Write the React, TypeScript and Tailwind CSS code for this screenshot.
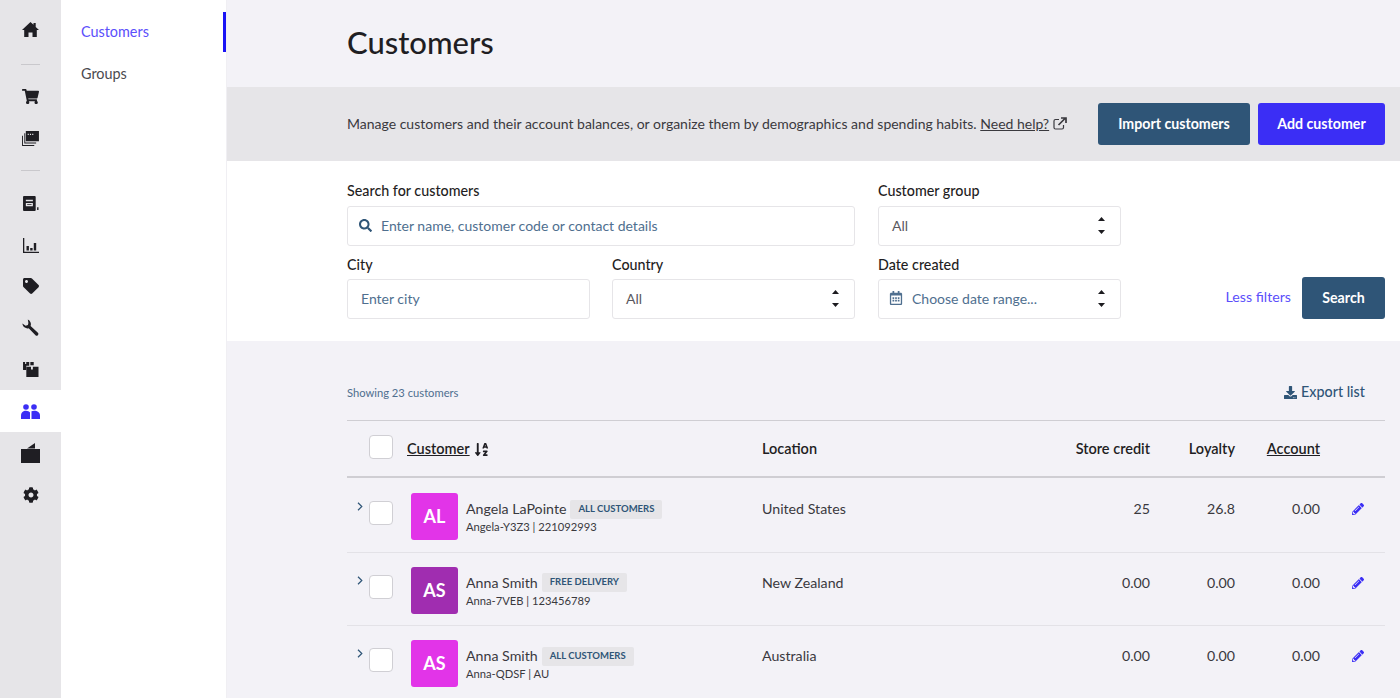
import { FaShoppingCart, FaTag, FaCog, FaSearch, FaRegCalendarAlt, FaDownload, FaPencilAlt, FaSortAlphaDown } from "react-icons/fa";

function HomeIcon() {
  return (
    <svg viewBox="0 0 17 15" className="w-[17px] h-[15px]" fill="currentColor">
      <path d="M8.500 0 11.500 2.800V1h2.200v3.900L17 8h-2.200v7h-4.300v-4.500h-4V15H2.200V8H0z" />
    </svg>
  );
}

function StackIcon() {
  return (
    <svg viewBox="0 0 18 16" className="w-[17px] h-[15px]" fill="currentColor">
      <path d="M4 0h14v11H4zM6 3v1.200h1.200V3zm2.400 0v1.200h1.200V3zm2.400 0v1.200H12V3z" fillRule="evenodd" />
      <path d="M2.400 2.500v10.800H15v-1H3.400V2.500z" />
      <path d="M0 5v11h13v-1H1V5z" />
    </svg>
  );
}

function ReceiptIcon() {
  return (
    <svg viewBox="0 0 17 16" className="w-[16px] h-[15px] mt-[2px]" fill="currentColor">
      <path fillRule="evenodd" d="M1 0h11.500a1 1 0 0 1 1 1v14a1 1 0 0 1-1 1H1a1 1 0 0 1-1-1V1a1 1 0 0 1 1-1zm2 4v1.500h7.500V4zm0 3.500V11h7.500V7.500zm1.400 1.200h4.700v1H4.400z" />
      <path d="M15 12h1.500v3H15z" />
    </svg>
  );
}

function ChartIcon() {
  return (
    <svg viewBox="0 0 16 15" className="w-[16px] h-[15px] mt-[3px]" fill="currentColor">
      <path d="M0 0h1.300v13.700H16V15H0z" />
      <path d="M3.500 8h2.400v4.500H3.500zM7.200 10h2.400v2.500H7.200zM10.800 5h2.400v7.500h-2.400z" />
    </svg>
  );
}

function WrenchIcon() {
  return (
    <svg viewBox="0 0 17 17" className="w-[17px] h-[17px]" fill="currentColor">
      <path d="M5.800.6a5 5 0 0 1 2.800 6.300l7.300 6.900a1.700 1.700 0 0 1-2.400 2.400L6.700 9.200A5 5 0 0 1 .5 5.300l-.1-.9 3.200 2.300 2.300-.6.500-2.200z" />
    </svg>
  );
}

function BoxesIcon() {
  return (
    <svg viewBox="0 0 17 16" className="w-[16px] h-[15px]" fill="currentColor">
      <path d="M0 0h2.200v2.200h1.200V0h3.200v4H3.500v4.500H0z" />
      <path d="M7.800 0h3.600v3.500H7.800z" />
      <path fillRule="evenodd" d="M3.500 5h5v3h2V5h6v11h-13z" />
    </svg>
  );
}

function UsersIcon() {
  return (
    <svg viewBox="0 0 19 15" className="w-[19px] h-[15px]" fill="currentColor">
      <circle cx="5" cy="3" r="2.800" />
      <circle cx="13" cy="3" r="2.800" />
      <path d="M0 15v-3.500C0 8.500 2.200 6.700 5 6.700c1.700 0 3.200.7 4 1.900V15z" />
      <path d="M10.500 15V7.300c.8-.4 1.600-.6 2.600-.6 3.400 0 5.900 2 5.900 4.800V15z" />
    </svg>
  );
}

function WalletIcon() {
  return (
    <svg viewBox="0 0 19 20" className="w-[19px] h-[20px]" fill="currentColor">
      <path d="M0 6h19v14H0z" />
      <path d="M6 5.400 14 0v5.400z" />
    </svg>
  );
}

function ExternalIcon() {
  return (
    <svg viewBox="0 0 14 13" className="w-[14px] h-[13px]" fill="none" stroke="currentColor">
      <path d="M10.500 8v2.500a1.500 1.500 0 0 1-1.500 1.500H2.500A1.500 1.500 0 0 1 1 10.500V4a1.500 1.500 0 0 1 1.500-1.500H6" strokeWidth="1.200" />
      <path d="M5.500 8 12 1.500M8 1h5v5" strokeWidth="1.700" />
    </svg>
  );
}

function SelectArrows() {
  return (
    <svg viewBox="0 0 7 17" className="w-[7px] h-[17px] text-[#1c1b1f] mr-[2px]" fill="currentColor">
      <path d="M3.500 0 7 4H0zM0 13h7l-3.500 4z" />
    </svg>
  );
}

function Chevron() {
  return (
    <svg viewBox="0 0 6 9" className="w-[6px] h-[9px]" fill="none" stroke="#2f5577" strokeWidth="1.200">
      <path d="M1 .8 4.800 4.500 1 8.200" />
    </svg>
  );
}

function NavIcon({ children, active }: { children: React.ReactNode; active?: boolean }) {
  return (
    <div className={"h-[41.8px] flex items-center justify-center " + (active ? "bg-white text-[#3b2ef5]" : "text-[#1f1e23]")}>
      {children}
    </div>
  );
}

function Field({ label, width, low, children }: { label: string; width: string; low?: boolean; children: React.ReactNode }) {
  return (
    <div className={width}>
      <div className={"h-5 mb-[5px] text-[14.3px] leading-5 font-medium text-[#1f1e23] " + (low ? "translate-y-px" : "")}>{label}</div>
      <div className="h-10 bg-white border border-[#e6e5e8] rounded-[3px] flex items-center px-[13px] pb-[2px] text-[14px] text-[#5a5960]">
        {children}
      </div>
    </div>
  );
}

const rows = [
  { initials: "AL", color: "bg-[#e234e8]", name: "Angela LaPointe", tag: "All customers", sub: "Angela-Y3Z3 | 221092993", location: "United States", credit: "25", loyalty: "26.8", account: "0.00" },
  { initials: "AS", color: "bg-[#a02db0]", name: "Anna Smith", tag: "Free delivery", sub: "Anna-7VEB | 123456789", location: "New Zealand", credit: "0.00", loyalty: "0.00", account: "0.00" },
  { initials: "AS", color: "bg-[#e234e8]", name: "Anna Smith", tag: "All customers", sub: "Anna-QDSF | AU", location: "Australia", credit: "0.00", loyalty: "0.00", account: "0.00" },
];

export default function App() {
  return (
    <div className="flex h-[698px] overflow-hidden bg-white font-['Lato',sans-serif] text-[#1f1e23]">
      {/* Icon rail */}
      <div className="w-[61px] shrink-0 bg-[#e6e5e8]">
        <div className="pt-[9px]">
          <NavIcon><HomeIcon /></NavIcon>
        </div>
        <div className="mx-auto w-[19px] mt-[13px] mb-[11px] border-t border-[#c9c8cc]" />
        <NavIcon><FaShoppingCart size={17} /></NavIcon>
        <NavIcon><StackIcon /></NavIcon>
        <div className="mx-auto w-[19px] mt-[11px] mb-[10px] border-t border-[#c9c8cc]" />
        <NavIcon><ReceiptIcon /></NavIcon>
        <NavIcon><ChartIcon /></NavIcon>
        <NavIcon><FaTag size={16} /></NavIcon>
        <NavIcon><WrenchIcon /></NavIcon>
        <NavIcon><BoxesIcon /></NavIcon>
        <NavIcon active><UsersIcon /></NavIcon>
        <NavIcon><WalletIcon /></NavIcon>
        <NavIcon><FaCog size={16} /></NavIcon>
      </div>

      {/* Sub nav */}
      <div className="w-[166px] shrink-0 bg-white border-r border-[#f0eff3] pt-[12px]">
        <div className="h-10 flex items-center pl-5 text-[14.4px] text-[#5b4ffb] border-r-[3px] border-[#1a14f5]">Customers</div>
        <div className="h-[44px] flex items-center pl-5 text-[14.4px] text-[#4b4a50]">Groups</div>
      </div>

      <div className="flex-1 min-w-0 bg-[#f3f2f7]">
        {/* Title */}
        <div className="h-[87px] pl-[120px] pt-[22px]">
          <h1 className="text-[31px] leading-10 font-medium text-[#1f1e23]">Customers</h1>
        </div>

        {/* Banner */}
        <div className="h-[74px] bg-[#e6e5e8] pl-[120px] pr-[15px] flex items-center">
          <p className="text-[14px] pb-[2px] text-[#3a393e]">
            Manage customers and their account balances, or organize them by demographics and spending habits.{" "}
            <span className="underline">Need help?</span>
          </p>
          <span className="ml-[4px] pb-[2px] text-[#3a393e]"><ExternalIcon /></span>
          <button className="ml-auto h-[42px] w-[152px] rounded-[3px] bg-[#2f5577] text-white text-[14.2px] font-bold">Import customers</button>
          <button className="ml-2 h-[42px] w-[127px] rounded-[3px] bg-[#3b2ef5] text-white text-[14.2px] font-bold">Add customer</button>
        </div>

        {/* Filters */}
        <div className="h-[180px] bg-white pl-[120px] pr-[15px] pt-5">
          <div className="flex gap-[23px]">
            <Field label="Search for customers" width="w-[508px]">
              <FaSearch size={13} className="text-[#2f5577] -ml-[2px] mr-[9px]" />
              <span className="text-[#4f6f8f]">Enter name, customer code or contact details</span>
            </Field>
            <Field label="Customer group" width="w-[243px]">
              <span className="flex-1">All</span>
              <SelectArrows />
            </Field>
          </div>
          <div className="flex gap-[23px] mt-[8px] items-end">
            <div className="flex gap-[22px]">
              <Field low label="City" width="w-[243px]">
                <span className="text-[#4f6f8f]">Enter city</span>
              </Field>
              <Field low label="Country" width="w-[243px]">
                <span className="flex-1">All</span>
                <SelectArrows />
              </Field>
            </div>
            <Field low label="Date created" width="w-[243px]">
              <FaRegCalendarAlt size={14} className="text-[#4f6f8f] mr-[9px] -ml-[3px]" />
              <span className="flex-1 text-[#4f6f8f]">Choose date range...</span>
              <SelectArrows />
            </Field>
            <div className="ml-auto flex items-center gap-[11px]">
              <span className="text-[14.2px] pb-[2px] text-[#5b4ffb]">Less filters</span>
              <button className="h-[42px] w-[83px] rounded-[3px] bg-[#2f5577] text-white text-[14.2px] font-bold">Search</button>
            </div>
          </div>
        </div>

        {/* List */}
        <div className="pl-[120px] pr-[15px]">
          <div className="h-[79px] flex items-end pb-[18px] justify-between">
            <span className="text-[11.2px] leading-5 mb-[-1px] text-[#4f6f8f]">Showing 23 customers</span>
            <span className="flex items-center gap-[4px] pr-5 text-[14.3px] leading-5 font-medium text-[#2f5577]">
              <FaDownload size={13} />
              Export list
            </span>
          </div>

          <div className="h-[58px] border-t border-b-2 border-[#cfced3] flex items-center text-[14.5px] font-semibold text-[#1f1e23]">
            <div className="w-[22px]" />
            <div className="w-[24px] h-[24px] -mt-[3px] bg-white border border-[#d0cfd4] rounded-[4px]" />
            <div className="w-[369px] pl-[14px] pt-[1px] flex items-center gap-[4px]">
              <span className="underline">Customer</span>
              <FaSortAlphaDown size={15} />
            </div>
            <div className="flex-1 pt-[1px]">Location</div>
            <div className="w-[85px] pt-[1px] text-right whitespace-nowrap">Store credit</div>
            <div className="w-[85px] pt-[1px] text-right">Loyalty</div>
            <div className="w-[85px] pt-[1px] text-right underline">Account</div>
            <div className="w-[65px]" />
          </div>

          <div className="pt-px">
            {rows.map((row, i) => (
              <div key={i} className="h-[73.6px] border-b border-[#e3e2e7] pt-[14px] flex items-start text-[14.2px] text-[#3a393e]">
                <div className="w-[22px] pl-[10px] pt-[9px]"><Chevron /></div>
                <div className="w-[24px] h-[24px] mt-2 bg-white border border-[#d0cfd4] rounded-[4px]" />
                <div className="w-[369px] pl-[18px] flex items-start gap-2">
                  <div className={"w-[47px] h-[47px] rounded-[3px] flex items-center justify-center text-white text-[18px] font-bold " + row.color}>
                    {row.initials}
                  </div>
                  <div className="pt-[6px]">
                    <div className="h-5 flex items-center leading-5">
                      {row.name}
                      <span className="ml-[4px] px-2 h-[19px] leading-[18px] rounded-[2px] bg-[#e6e5e8] text-[#2f5577] text-[9.5px] font-bold uppercase">{row.tag}</span>
                    </div>
                    <div className="text-[11.2px] leading-4">{row.sub}</div>
                  </div>
                </div>
                <div className="flex-1 pt-[6px] leading-5">{row.location}</div>
                <div className="w-[85px] pt-[6px] leading-5 text-right">{row.credit}</div>
                <div className="w-[85px] pt-[6px] leading-5 text-right">{row.loyalty}</div>
                <div className="w-[85px] pt-[6px] leading-5 text-right">{row.account}</div>
                <div className="w-[65px] pl-[32px] pt-[10px] text-[#3b2ef5]"><FaPencilAlt size={12} /></div>
              </div>
            ))}
          </div>
        </div>
      </div>
    </div>
  );
}
